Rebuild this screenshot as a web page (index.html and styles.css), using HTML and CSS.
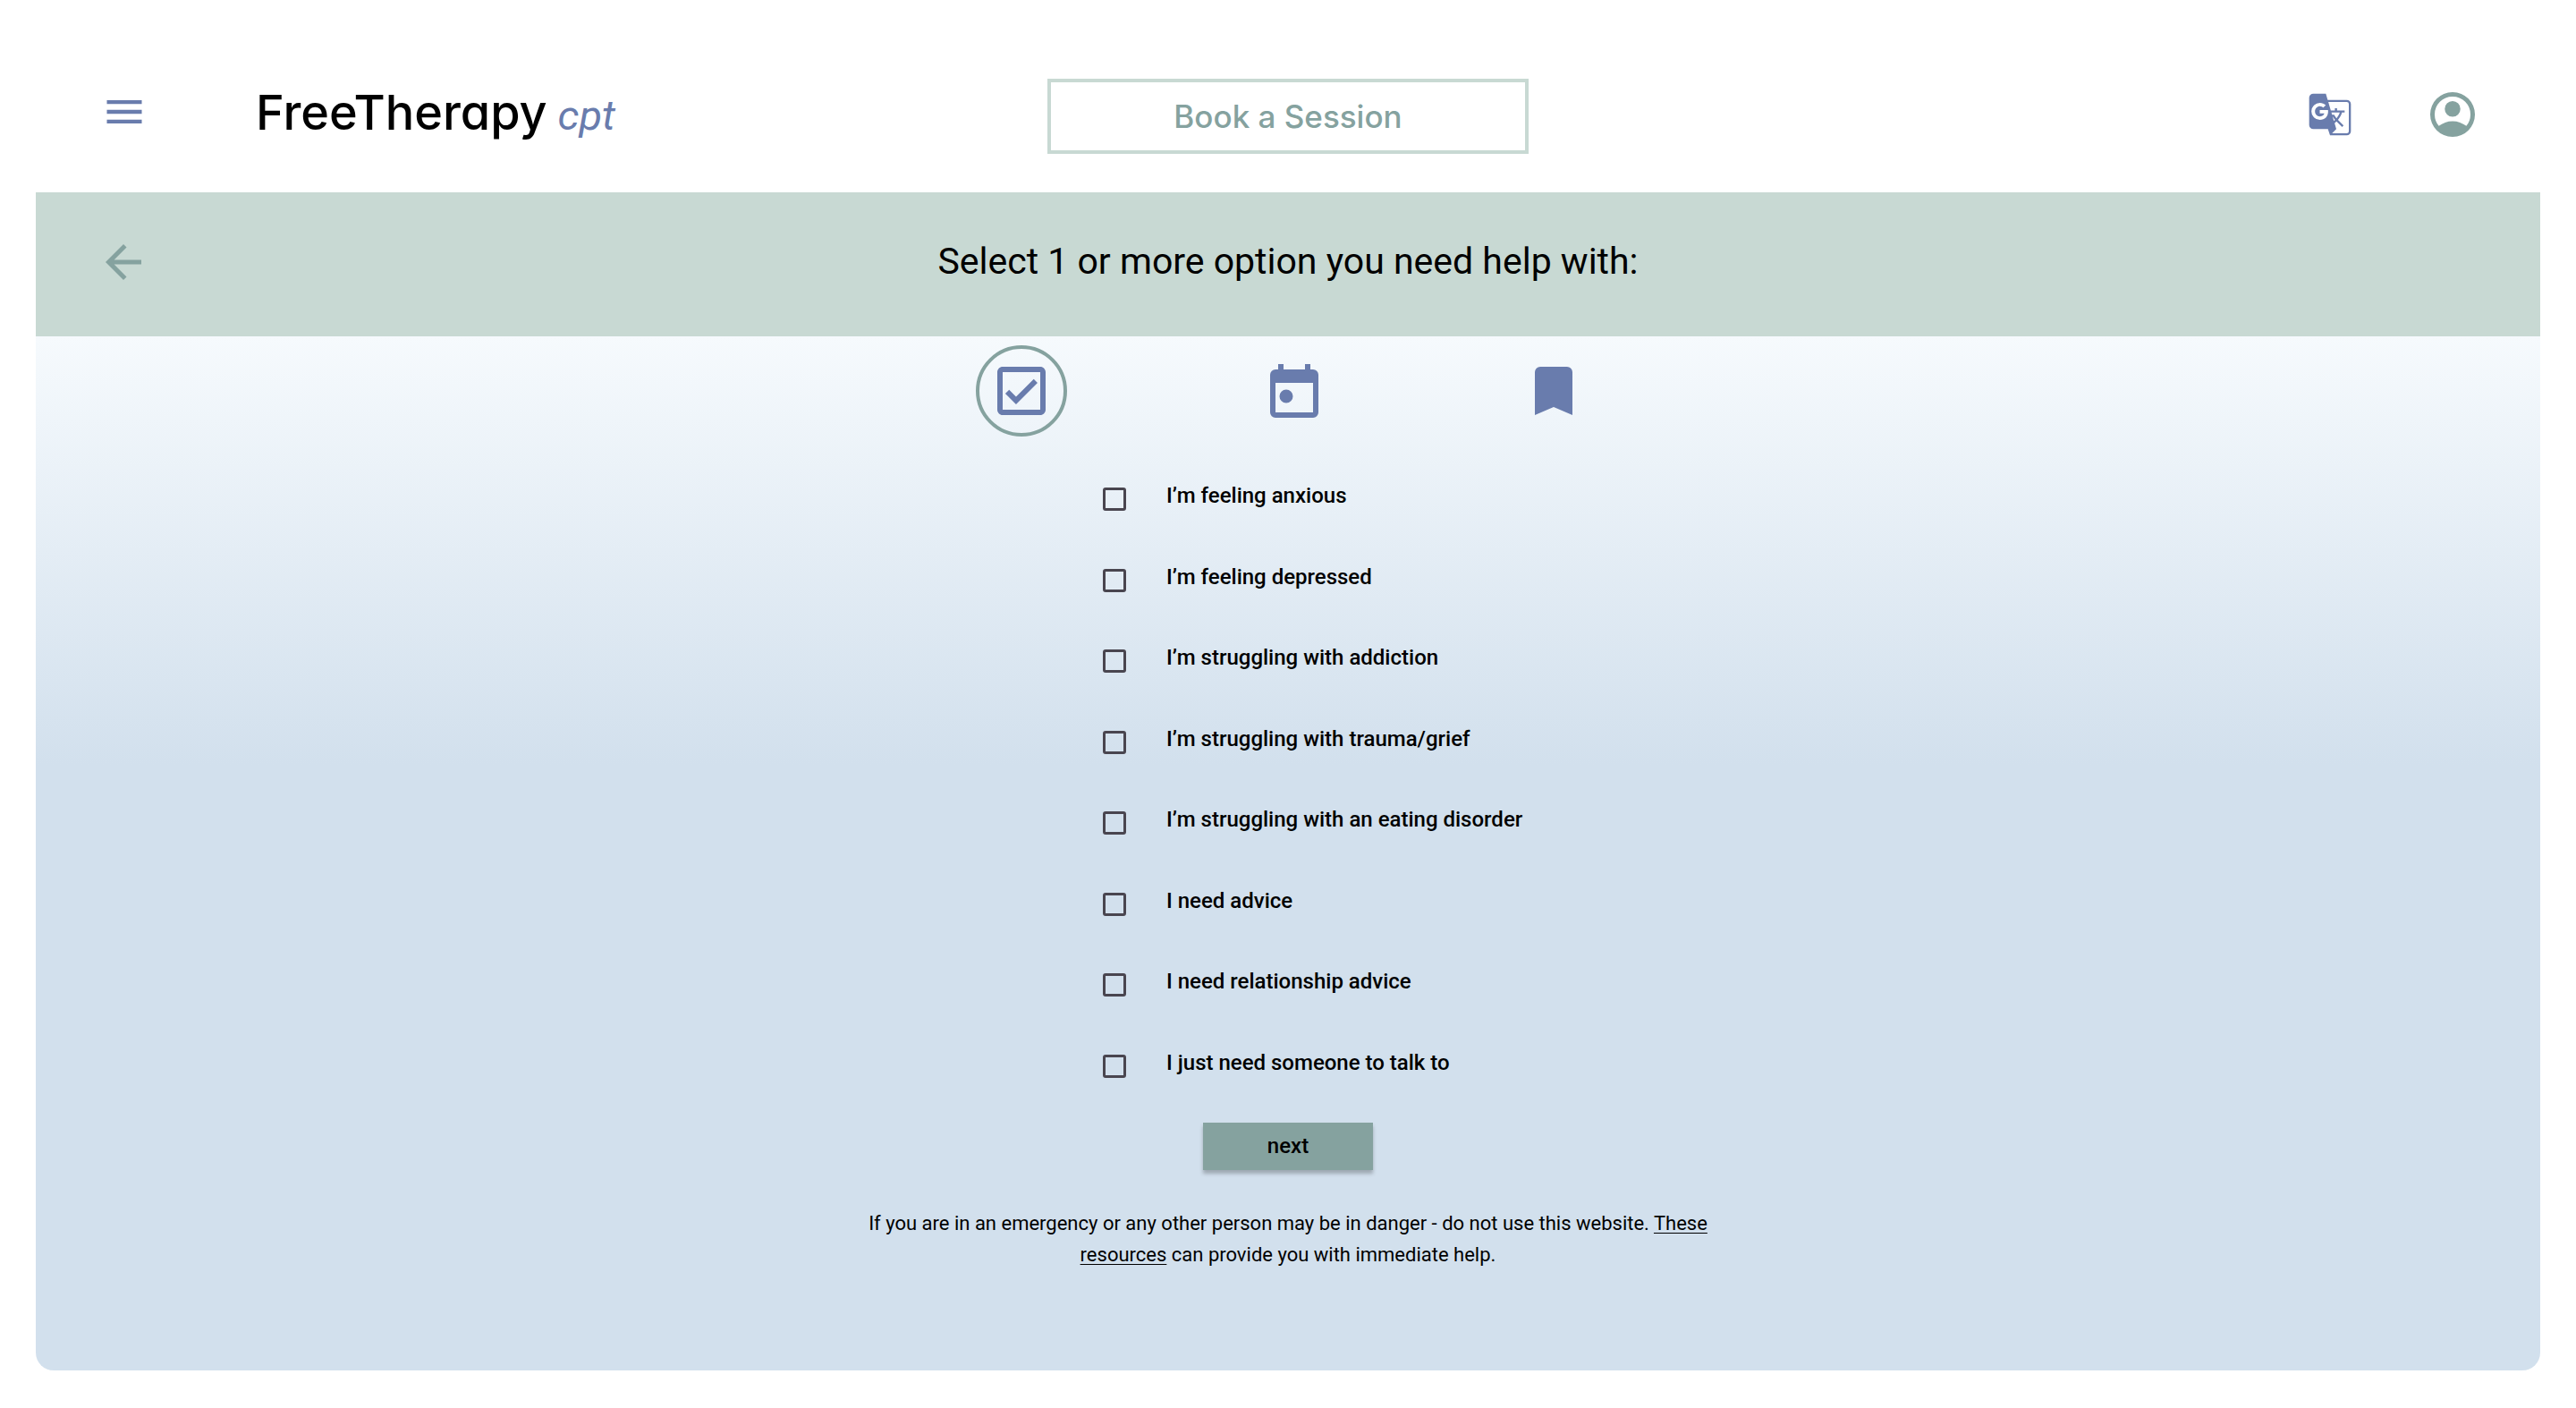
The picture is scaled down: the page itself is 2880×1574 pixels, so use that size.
FILE: index.html
```html
<!DOCTYPE html>
<html lang="en">
<head>
<meta charset="utf-8">
<meta name="viewport" content="width=device-width, initial-scale=1">
<title>FreeTherapy cpt - Book a Session</title>
<link rel="stylesheet" href="styles.css">
</head>
<body>
<header class="topbar">
  <div class="topbar-left">
    <button class="icon-button menu-button" type="button" aria-label="Menu">
      <svg class="icon-menu" viewBox="0 0 24 24" aria-hidden="true"><path d="M3 18h18v-2H3v2zm0-5h18v-2H3v2zm0-7v2h18V6H3z"/></svg>
    </button>
    <a class="logo" href="#"><span class="logo-name">FreeTherapy</span><span class="logo-tag">cpt</span></a>
  </div>
  <button class="book-button" type="button">Book a Session</button>
  <div class="topbar-right">
    <button class="icon-button" type="button" aria-label="Translate">
      <svg class="icon-translate" viewBox="0 0 24 24" aria-hidden="true"><path d="M20,5H10.88L10,2H4A2,2 0 0,0 2,4V17A2,2 0 0,0 4,19H11L12,22H20A2,2 0 0,0 22,20V7A2,2 0 0,0 20,5M7.17,14.59A4.09,4.09 0 0,1 3.08,10.5A4.09,4.09 0 0,1 7.17,6.41C8.21,6.41 9.16,6.78 9.91,7.5L10,7.54L8.75,8.72L8.69,8.67C8.4,8.4 7.91,8.08 7.17,8.08C5.86,8.08 4.79,9.17 4.79,10.5C4.79,11.83 5.86,12.92 7.17,12.92C8.54,12.92 9.13,12.05 9.29,11.46H7.08V9.91H11.03L11.04,10C11.08,10.17 11.09,10.3 11.09,10.5C11.09,12.94 9.5,14.59 7.17,14.59M13.2,12.88C13.53,13.5 13.94,14.06 14.39,14.58L13.85,15.11L13.2,12.88M13.97,12.12H13L12.67,11.08H16.66C16.66,11.08 16.32,12.39 15.1,13.82C14.58,13.2 14.21,12.59 13.97,12.12M21,20A1,1 0 0,1 20,21H13L15,19L14.19,16.23L15.11,15.31L17.79,18L18.5,17.27L15.81,14.59C16.71,13.56 17.41,12.34 17.73,11.08H19V10.04H15.36V9H14.32V10.04H12.36L11.18,6H20A1,1 0 0,1 21,7V20Z"/></svg>
    </button>
    <button class="icon-button" type="button" aria-label="Account">
      <svg class="icon-account" viewBox="0 -960 960 960" aria-hidden="true"><path d="M234-276q51-39 114-61.5T480-360q69 0 132 22.5T726-276q35-41 54.5-93T800-480q0-133-93.5-226.5T480-800q-133 0-226.5 93.5T160-480q0 59 19.5 111t54.5 93Zm246-164q-59 0-99.5-40.5T340-580q0-59 40.5-99.5T480-720q59 0 99.5 40.5T620-580q0 59-40.5 99.5T480-440Zm0 360q-83 0-156-31.5T197-197q-54-54-85.5-127T80-480q0-83 31.5-156T197-763q54-54 127-85.5T480-880q83 0 156 31.5T763-763q54 54 85.5 127T880-480q0 83-31.5 156T763-197q-54 54-127 85.5T480-80Z"/></svg>
    </button>
  </div>
</header>

<main class="panel">
  <div class="banner">
    <button class="icon-button back-button" type="button" aria-label="Back">
      <svg class="icon-back" viewBox="0 0 24 24" aria-hidden="true"><path d="M20 11H7.83l5.59-5.59L12 4l-8 8 8 8 1.41-1.41L7.83 13H20v-2z"/></svg>
    </button>
    <h1 class="banner-title">Select 1 or more option you need help with:</h1>
  </div>

  <nav class="steps" aria-label="Booking steps">
    <a class="step step-current" href="#" aria-label="Options" aria-current="step">
      <svg class="icon-step" viewBox="0 0 24 24" aria-hidden="true"><path d="M19 3H5c-1.1 0-2 .9-2 2v14c0 1.100.9 2 2 2h14c1.100 0 2-.9 2-2V5c0-1.100-.9-2-2-2zm0 16H5V5h14v14zM17.990 9l-1.410-1.420-6.590 6.590-2.580-2.570-1.420 1.410 4 3.990z"/></svg>
    </a>
    <a class="step" href="#" aria-label="Date">
      <svg class="icon-step" viewBox="0 -960 960 960" aria-hidden="true"><path d="M360-300q-42 0-71-29t-29-71q0-42 29-71t71-29q42 0 71 29t29 71q0 42-29 71t-71 29ZM200-80q-33 0-56.500-23.500T120-160v-560q0-33 23.500-56.500T200-800h40v-80h80v80h320v-80h80v80h40q33 0 56.500 23.500T840-720v560q0 33-23.500 56.500T760-80H200Zm0-80h560v-440H200v440Z"/></svg>
    </a>
    <a class="step" href="#" aria-label="Confirm">
      <svg class="icon-step" viewBox="0 -960 960 960" aria-hidden="true"><path d="M200-120v-640q0-33 23.500-56.500T280-840h400q33 0 56.500 23.500T760-760v640L480-240 200-120Z"/></svg>
    </a>
  </nav>

  <form class="help-form">
    <div class="options">
      <label class="option"><input class="option-box" type="checkbox" name="help"><span>I’m feeling anxious</span></label>
      <label class="option"><input class="option-box" type="checkbox" name="help"><span>I’m feeling depressed</span></label>
      <label class="option"><input class="option-box" type="checkbox" name="help"><span>I’m struggling with addiction</span></label>
      <label class="option"><input class="option-box" type="checkbox" name="help"><span>I’m struggling with trauma/grief</span></label>
      <label class="option"><input class="option-box" type="checkbox" name="help"><span>I’m struggling with an eating disorder</span></label>
      <label class="option"><input class="option-box" type="checkbox" name="help"><span>I need advice</span></label>
      <label class="option"><input class="option-box" type="checkbox" name="help"><span>I need relationship advice</span></label>
      <label class="option"><input class="option-box" type="checkbox" name="help"><span>I just need someone to talk to</span></label>
    </div>
    <button class="next-button" type="submit">next</button>
  </form>

  <p class="notice">If you are in an emergency or any other person may be in danger - do not use this website. <a class="notice-link" href="#">These resources</a> can provide you with immediate help.</p>
</main>
</body>
</html>
```
FILE: styles.css
```css
:root {
  --blue: #697cad;
  --teal: #85a29f;
  --mint: #c8d9d3;
  --sky: #d2e0ed;
}

* {
  box-sizing: border-box;
}

body {
  margin: 0;
  padding: 0 40px 42px;
  background: #fff;
  color: #000;
  font-family: Roboto, "Liberation Sans", sans-serif;
}

a {
  color: inherit;
}

button {
  padding: 0;
  border: 0;
  background: none;
  font: inherit;
  cursor: pointer;
}

svg {
  display: block;
  fill: currentColor;
}

.icon-button {
  color: var(--blue);
}

.topbar {
  display: grid;
  grid-template-columns: 1fr auto 1fr;
  align-items: center;
  height: 215px;
  padding: 44px 68px 0;
}

.topbar-left,
.topbar-right {
  display: flex;
  align-items: center;
  padding-bottom: 4px;
}

.topbar-left {
  gap: 121px;
  padding-left: 5px;
}

.topbar-right {
  justify-content: flex-end;
  gap: 79px;
}

.menu-button {
  padding-bottom: 6px;
}

.icon-menu {
  width: 52px;
  height: 52px;
}

.icon-translate {
  width: 56px;
  height: 56px;
}

.icon-account {
  width: 60px;
  height: 60px;
  color: var(--teal);
}

.logo {
  display: flex;
  align-items: baseline;
  gap: 12px;
  text-decoration: none;
  line-height: 64px;
}

.logo-name {
  font-family: Inter, sans-serif;
  font-size: 54px;
  font-weight: 500;
  font-feature-settings: "cv11";
}

.logo-tag {
  color: var(--blue);
  font-size: 47px;
  font-style: italic;
}

.book-button {
  width: 538px;
  height: 84px;
  border: 4px solid var(--mint);
  color: var(--teal);
  font-family: Inter, sans-serif;
  font-size: 35px;
  font-weight: 500;
}

.panel {
  padding-bottom: 112px;
  border-radius: 0 0 20px 20px;
  background: linear-gradient(#f6fafd 161px, var(--sky) 640px);
}

.banner {
  display: grid;
  grid-template-columns: 1fr auto 1fr;
  align-items: center;
  height: 161px;
  padding: 0 68px 6px;
  background: var(--mint);
}

.back-button {
  justify-self: start;
  color: var(--teal);
}

.icon-back {
  width: 60px;
  height: 60px;
}

.banner-title {
  margin: 0;
  padding-bottom: 2px;
  font-size: 41px;
  font-weight: 400;
  line-height: 48px;
}

.steps {
  display: flex;
  justify-content: center;
  align-items: center;
  gap: 218px;
  padding: 10px 16px 0 0;
}

.step {
  color: var(--blue);
}

.step-current {
  padding: 11px;
  border: 4px solid var(--teal);
  border-radius: 50%;
}

.icon-step {
  width: 72px;
  height: 72px;
}

.help-form {
  display: flex;
  flex-direction: column;
  align-items: center;
  gap: 1px;
  padding-top: 52px;
}

.options {
  display: grid;
  grid-auto-rows: 1fr;
  row-gap: 10px;
  width: 414px;
  min-height: 714px;
}

.option {
  display: flex;
  align-items: flex-start;
  gap: 45px;
  font-size: 24px;
  font-weight: 500;
  line-height: 28px;
  white-space: nowrap;
}

.option-box {
  flex: none;
  appearance: none;
  width: 26px;
  height: 26px;
  margin: 5px 0 0;
  border: 3px solid #49454f;
  border-radius: 3px;
}

.option-box:checked {
  background: var(--blue);
}

.next-button {
  width: 190px;
  height: 53px;
  padding-bottom: 2px;
  background: var(--teal);
  box-shadow: 0 4px 4px rgba(0, 0, 0, 0.25);
  font-size: 24px;
  font-weight: 500;
}

.notice {
  max-width: 960px;
  margin: 42px auto 0;
  font-size: 22px;
  line-height: 35px;
  text-align: center;
}

.notice-link {
  text-decoration-thickness: 1px;
  text-underline-offset: 3px;
}
```
